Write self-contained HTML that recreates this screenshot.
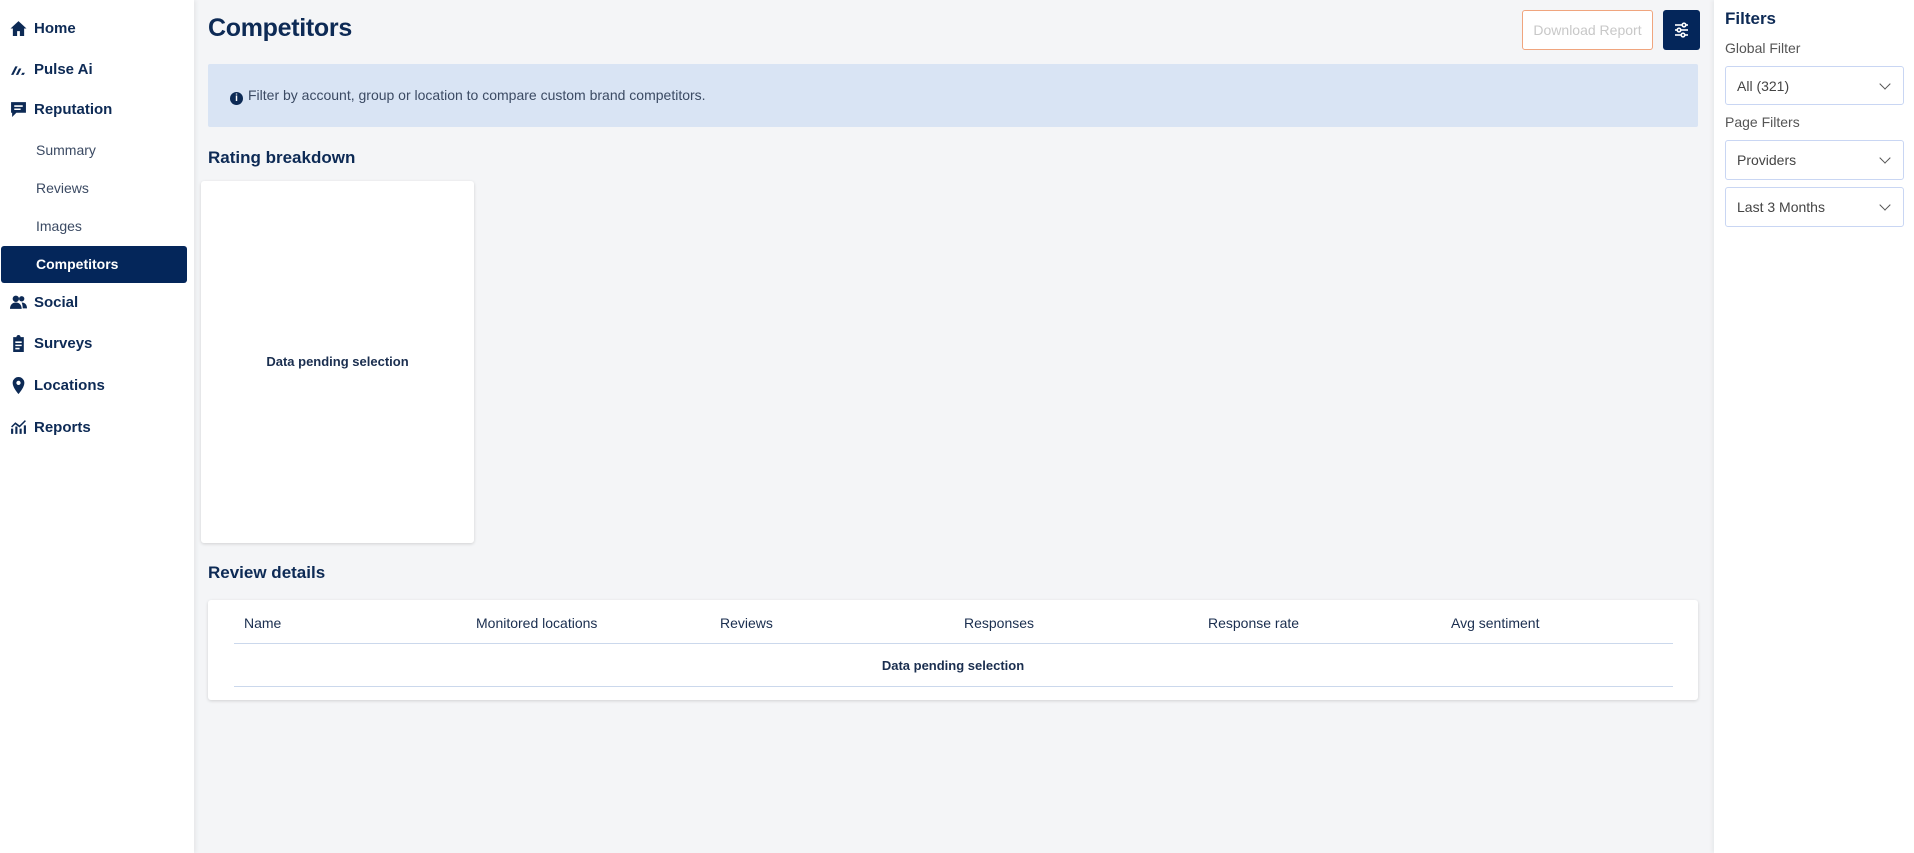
<!DOCTYPE html>
<html><head><meta charset="utf-8"><style>
*{box-sizing:border-box;margin:0;padding:0}
body{width:1914px;height:853px;background:#f4f5f7;font-family:"Liberation Sans",sans-serif;color:#0d2a55;position:relative;overflow:hidden}
.side{position:absolute;left:0;top:0;width:194px;height:853px;background:#fff;box-shadow:2px 0 4px rgba(0,0,0,.06)}
.it{position:absolute;left:10px;font-size:15px;font-weight:bold;display:flex;align-items:center;gap:7px;color:#0d2a55}
.it svg{width:17px;height:17px;fill:#0d2a55}
.sub{position:absolute;left:36px;font-size:14px;color:#3b4a63}
.act{position:absolute;left:1px;top:246px;width:186px;height:37px;background:#04265a;border-radius:3px;color:#fff;font-size:14px;font-weight:bold;padding-left:35px;line-height:37px}
.abs{position:absolute}
.sel{position:absolute;left:1725px;width:179px;height:40px;border:1px solid #c9d6f3;border-radius:3px;background:#fff;font-size:14px;color:#444;padding-left:11px;display:flex;align-items:center}
.sel:after{content:"";position:absolute;right:14px;top:13px;width:7px;height:7px;border-right:1.5px solid #555;border-bottom:1.5px solid #555;transform:rotate(45deg)}
.th{position:absolute;top:615px;font-size:14px;color:#1a2e4f}
.h2{position:absolute;left:208px;font-size:17px;font-weight:bold}
</style></head><body>
<div class="side">
<div class="it" style="top:20px"><svg viewBox="0 0 16 16"><path d="M8 1L0.5 8h2.2v7h4v-4.5h2.6V15h4V8h2.2z"/></svg>Home</div>
<div class="it" style="top:61px"><svg viewBox="0 0 16 16"><path d="M1 13l4-8h2.2l-4 8zM5.5 13l3-6h2.2l-3 6zM10.5 13h2.5l1-2h-2.5z"/></svg>Pulse Ai</div>
<div class="it" style="top:101px"><svg viewBox="0 0 16 16"><path d="M1 1h14v10H6l-4 4v-4H1zM4 4v1.5h8V4zM4 7v1.5h6V7z" fill-rule="evenodd"/></svg>Reputation</div>
<div class="sub" style="top:142px">Summary</div>
<div class="sub" style="top:180px">Reviews</div>
<div class="sub" style="top:218px">Images</div>
<div class="act">Competitors</div>
<div class="it" style="top:294px"><svg viewBox="0 0 16 16"><circle cx="5.5" cy="4.5" r="3"/><circle cx="11" cy="4.5" r="2.5"/><path d="M0 14c0-4 2.5-6 5.5-6s5.5 2 5.5 6zM11 8c3 0 5 2 5 5.5h-4c0-2-.5-4-1-5.5z"/></svg>Social</div>
<div class="it" style="top:335px"><svg viewBox="0 0 16 16"><path d="M3 2h3a2 2 0 0 1 4 0h3v14H3zM5 6v1.5h6V6zM5 9v1.5h6V9zM5 12v1.5h4V12z" fill-rule="evenodd"/></svg>Surveys</div>
<div class="it" style="top:377px"><svg viewBox="0 0 16 16"><path d="M8 0a5.5 5.5 0 0 0-5.5 5.5C2.5 10 8 16 8 16s5.5-6 5.5-10.5A5.5 5.5 0 0 0 8 0zm0 3.5a2 2 0 1 1 0 4 2 2 0 0 1 0-4z"/></svg>Locations</div>
<div class="it" style="top:419px"><svg viewBox="0 0 16 16"><path d="M1 14h2V9H1zM5 14h2V7H5zM9 14h2V9H9zM13 14h2V6h-2zM1 7l4-4 4 3 5-5 1 1-6 6-4-3-3 3z"/></svg>Reports</div>
</div>
<div class="abs" style="left:208px;top:14px;font-size:25px;font-weight:bold;letter-spacing:-0.3px">Competitors</div>
<div class="abs" style="left:1522px;top:10px;width:131px;height:40px;border:1px solid #f0a57e;border-radius:3px;background:#fff;color:#c8c8c8;font-size:14px;text-align:center;line-height:38px">Download Report</div>
<div class="abs" style="left:1663px;top:10px;width:37px;height:40px;background:#04265a;border-radius:3px"><svg width="37" height="40" viewBox="0 0 37 40"><g stroke="#fff" stroke-width="1.6" fill="#04265a"><line x1="12" y1="15" x2="25" y2="15"/><line x1="12" y1="20" x2="25" y2="20"/><line x1="12" y1="25" x2="25" y2="25"/><circle cx="21" cy="15" r="1.8"/><circle cx="16" cy="20" r="1.8"/><circle cx="20" cy="25" r="1.8"/></g></svg></div>
<div class="abs" style="left:208px;top:64px;width:1490px;height:63px;background:#d9e4f4;border-radius:2px;font-size:14px;color:#3b4a63;padding-left:22px;line-height:63px"><span style="display:inline-block;width:13px;height:13px;border-radius:50%;background:#0d2a55;color:#fff;font-size:10px;line-height:13px;text-align:center;font-weight:bold;vertical-align:-1px;margin-right:5px">i</span>Filter by account, group or location to compare custom brand competitors.</div>
<div class="h2" style="top:148px">Rating breakdown</div>
<div class="abs" style="left:201px;top:181px;width:273px;height:362px;background:#fff;border-radius:3px;box-shadow:0 1px 3px rgba(0,0,0,.15);font-size:13px;font-weight:bold;text-align:center;line-height:362px;color:#1a2e4f">Data pending selection</div>
<div class="h2" style="top:563px">Review details</div>
<div class="abs" style="left:208px;top:600px;width:1490px;height:100px;background:#fff;border-radius:3px;box-shadow:0 1px 3px rgba(0,0,0,.15)">
<div class="abs" style="left:26px;top:43px;width:1439px;border-top:1px solid #cbd8ec"></div>
<div class="abs" style="left:26px;top:86px;width:1439px;border-top:1px solid #cbd8ec"></div>
<div class="abs" style="left:0;width:1490px;top:58px;text-align:center;font-size:13px;font-weight:bold;color:#1a2e4f">Data pending selection</div>
</div>
<div class="th" style="left:244px">Name</div>
<div class="th" style="left:476px">Monitored locations</div>
<div class="th" style="left:720px">Reviews</div>
<div class="th" style="left:964px">Responses</div>
<div class="th" style="left:1208px">Response rate</div>
<div class="th" style="left:1451px">Avg sentiment</div>
<div class="abs" style="left:1714px;top:0;width:200px;height:853px;background:#fff;box-shadow:-2px 0 4px rgba(0,0,0,.05)"></div>
<div class="abs" style="left:1725px;top:9px;font-size:17px;font-weight:bold">Filters</div>
<div class="abs" style="left:1725px;top:40px;font-size:14px;color:#555">Global Filter</div>
<div class="sel" style="top:66px;height:39px">All (321)</div>
<div class="abs" style="left:1725px;top:114px;font-size:14px;color:#555">Page Filters</div>
<div class="sel" style="top:140px">Providers</div>
<div class="sel" style="top:187px">Last 3 Months</div>
</body></html>
